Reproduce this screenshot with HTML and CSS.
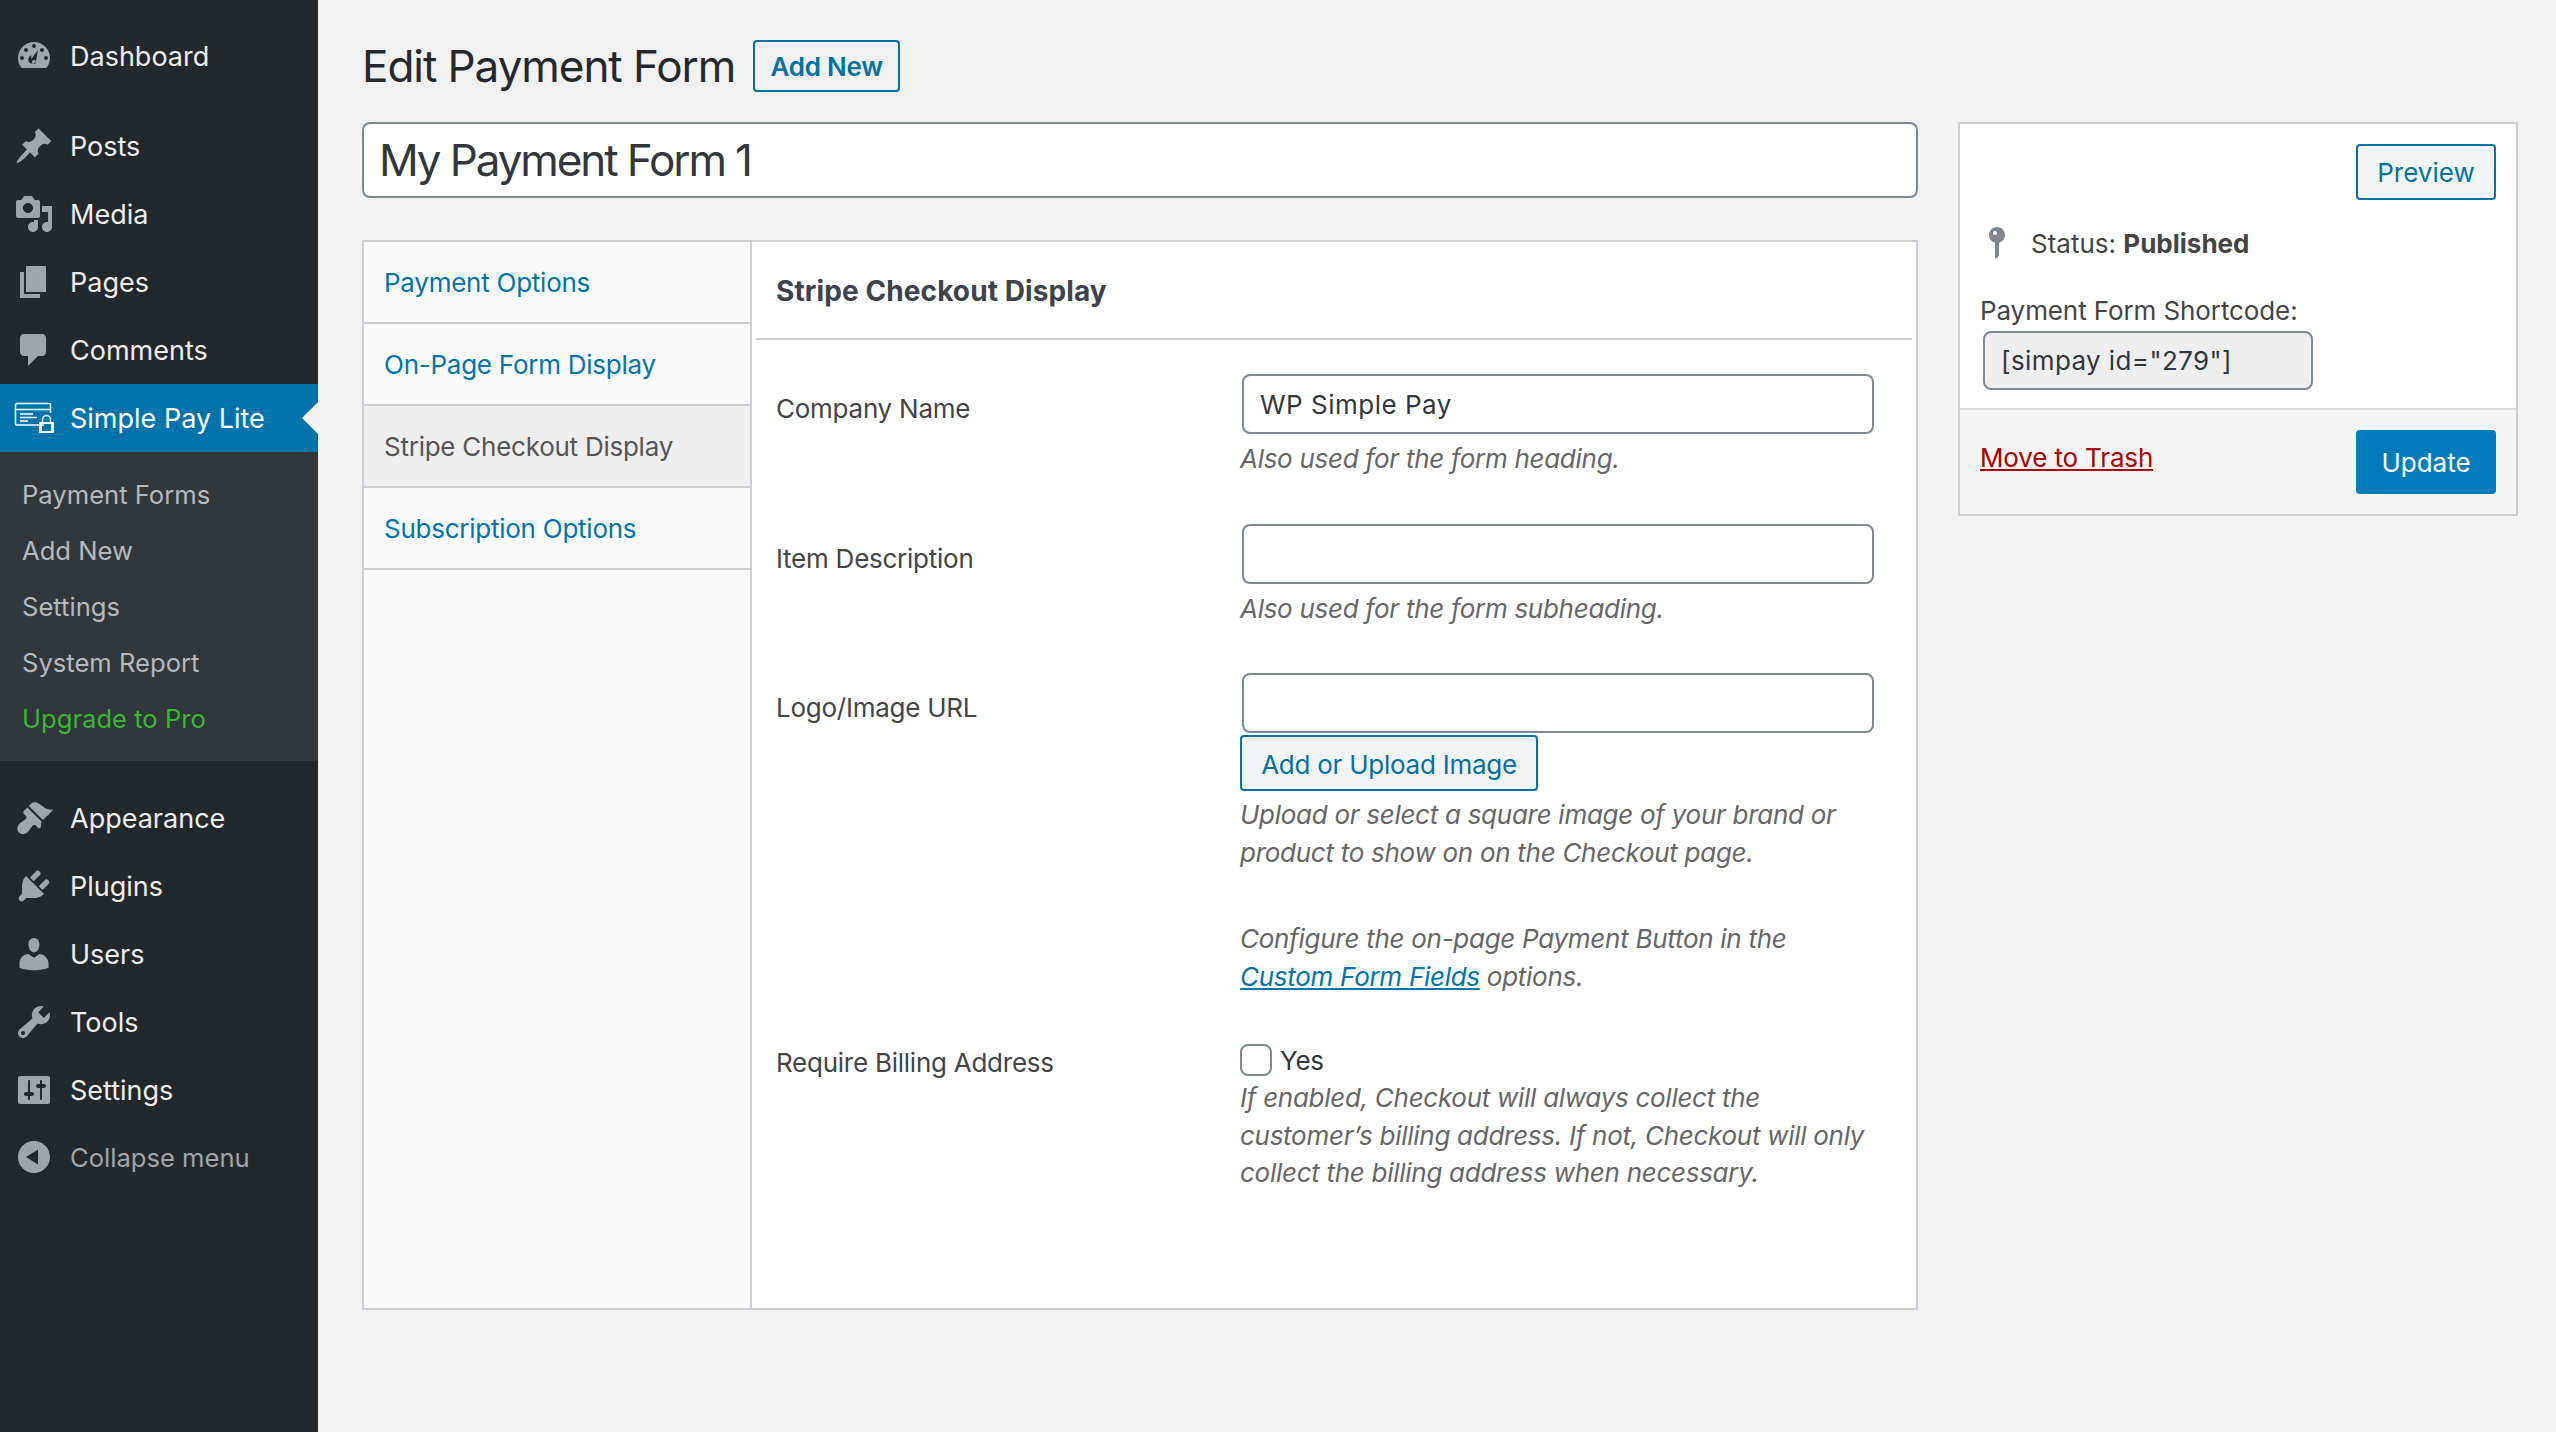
FILE: index.html
```html
<!DOCTYPE html>
<html>
<head>
    <meta charset="utf-8"/>
    <title>Edit Payment Form</title>
    <link rel="stylesheet" href="styles.css">
</head>
<body>
<div id="sidebar">
    <div class="menu-item first">
        <svg class="menu-icon" viewBox="0 0 20 20"><path fill-rule="evenodd" d="M3.76 16h12.48c1.1-1.37 1.76-3.11 1.76-5 0-4.42-3.58-8-8-8s-8 3.58-8 8c0 1.89.66 3.63 1.76 5zM10 4c.55 0 1 .45 1 1s-.45 1-1 1-1-.45-1-1 .45-1 1-1zM6 6c.55 0 1 .45 1 1s-.45 1-1 1-1-.45-1-1 .45-1 1-1zm8 0c.55 0 1 .45 1 1s-.45 1-1 1-1-.45-1-1 .45-1 1-1zm-5.37 5.55L12 7l-.9 5.06c-.07.43-.27.83-.57 1.13-.78.78-2.05.78-2.83 0-.78-.78-.78-2.05 0-2.83.25-.25.58-.39.93-.81zM4 10c.55 0 1 .45 1 1s-.45 1-1 1-1-.45-1-1 .45-1 1-1zm12 0c.55 0 1 .45 1 1s-.45 1-1 1-1-.45-1-1 .45-1 1-1zm-5 3c0-.55-.45-1-1-1s-1 .45-1 1 .45 1 1 1 1-.45 1-1z"/></svg>
        <span>Dashboard</span>
    </div>
    <div class="menu-item">
        <svg class="menu-icon" viewBox="0 0 20 20"><path d="M10.44 3.02l1.82-1.82 6.36 6.35-1.83 1.82c-1.05-.68-2.48-.57-3.41.36l-.75.75c-.92.93-1.04 2.35-.35 3.41l-1.83 1.82-2.41-2.41-2.8 2.79c-.42.42-3.38 2.71-3.8 2.29s1.86-3.39 2.28-3.81l2.79-2.79L4.1 9.36l1.83-1.82c1.05.69 2.48.57 3.4-.36l.75-.75c.93-.92 1.05-2.35.36-3.41z"/></svg>
        <span>Posts</span>
    </div>
    <div class="menu-item">
        <svg class="menu-icon" viewBox="0 0 20 20"><path fill-rule="evenodd" d="M13 11V4c0-.55-.45-1-1-1h-1.67L9 1H5L3.67 3H2c-.55 0-1 .45-1 1v7c0 .55.45 1 1 1h10c.55 0 1-.45 1-1zM7 4.5c1.38 0 2.5 1.12 2.5 2.5S8.38 9.5 7 9.5 4.5 8.38 4.5 7 5.62 4.5 7 4.5zM14 6h5v10.5c0 1.38-1.12 2.5-2.5 2.5S14 17.88 14 16.5s1.12-2.5 2.5-2.5c.17 0 .34.02.5.05V9h-3V6zm-4 8.05V13h2v3.5c0 1.38-1.12 2.5-2.5 2.5S7 17.88 7 16.5 8.12 14 9.5 14c.17 0 .34.02.5.05z"/></svg>
        <span>Media</span>
    </div>
    <div class="menu-item">
        <svg class="menu-icon" viewBox="0 0 20 20"><path d="M6 15V2h10v13H6zm-1 1h8v2H3V5h2v11z"/></svg>
        <span>Pages</span>
    </div>
    <div class="menu-item">
        <svg class="menu-icon" viewBox="0 0 20 20"><path d="M5 2h9c1.1 0 2 .9 2 2v7c0 1.1-.9 2-2 2h-2l-5 5v-5H5c-1.1 0-2-.9-2-2V4c0-1.1.9-2 2-2z"/></svg>
        <span>Comments</span>
    </div>
    <div class="menu-item active">
        <svg class="menu-icon" viewBox="0 0 40 32">
            <path class="outline" d="M30 23H3a1.5 1.5 0 0 1-1.5-1.500V3A1.500 1.500 0 0 1 3 1.500h32A1.500 1.500 0 0 1 36.500 3v8"/>
            <path class="outline" d="M2 7.500h34"/>
            <path class="outline" d="M6 12h13M6 15.500h17M6 19h8"/>
            <path d="M26 20h13a1 1 0 0 1 1 1v9a1 1 0 0 1-1 1H26a1 1 0 0 1-1-1v-9a1 1 0 0 1 1-1zm2 2v7h9v-7z" fill-rule="evenodd"/>
            <path class="outline" d="M28.500 20v-2.500a4 4 0 0 1 8 0V20"/>
        </svg>
        <span>Simple Pay Lite</span>
    </div>
    <div class="submenu">
        <div class="sub-item">Payment Forms</div>
        <div class="sub-item">Add New</div>
        <div class="sub-item">Settings</div>
        <div class="sub-item">System Report</div>
        <div class="sub-item upgrade">Upgrade to Pro</div>
    </div>
    <div class="menu-item after-sub">
        <svg class="menu-icon" viewBox="0 0 20 20"><path d="M14.48 11.06L7.41 3.99l1.5-1.5c.5-.56 2.3-.47 3.51.32 1.21.8 1.43 1.28 2.91 2.1 1.18.64 2.45 1.26 4.45.85z"/><path d="M13.77 11.77L6.7 4.7 4.93 6.47c-.39.39-.39 1.02 0 1.41l1.06 1.06c.39.39.39 1.03 0 1.42-.6.6-1.43 1.11-2.21 1.69-.35.26-.7.53-1.01.84-1.35 1.34-1.43 3.2-.25 4.38 1.18 1.18 3.04 1.1 4.38-.25.31-.31.58-.66.84-1.01.58-.78 1.09-1.61 1.69-2.21.39-.39 1.03-.39 1.42 0l1.06 1.06c.39.39 1.02.39 1.41 0z"/></svg>
        <span>Appearance</span>
    </div>
    <div class="menu-item">
        <svg class="menu-icon" viewBox="0 0 20 20"><path d="M13.110 4.360L9.870 7.600 8 5.730l3.240-3.240c.35-.34 1.050-.2 1.560.32.52.51.66 1.210.31 1.550zm-8 1.770l.91-1.120 9.010 9.010-1.190.84c-.71.71-2.630 1.160-3.820 1.160H6.140L4.900 17.260c-.59.59-1.540.59-2.120 0-.59-.58-.59-1.530 0-2.120l1.240-1.240v-3.880c0-1.130.4-3.190 1.090-3.890zm7.260 3.970l3.240-3.240c.34-.35 1.040-.21 1.550.31.52.51.66 1.210.31 1.550l-3.240 3.250z"/></svg>
        <span>Plugins</span>
    </div>
    <div class="menu-item">
        <svg class="menu-icon" viewBox="0 0 20 20"><path d="M10 9.250c-2.270 0-2.730-3.440-2.730-3.440C7 4.020 7.820 2 9.970 2c2.160 0 2.980 2.020 2.710 3.810 0 0-.41 3.440-2.680 3.440zm0 2.570L12.720 10c2.390 0 4.520 2.330 4.520 4.530v2.490s-3.650 1.130-7.240 1.130c-3.650 0-7.240-1.130-7.240-1.130v-2.490c0-2.250 1.940-4.480 4.470-4.480z"/></svg>
        <span>Users</span>
    </div>
    <div class="menu-item">
        <svg class="menu-icon" viewBox="0 0 20 20"><path fill-rule="evenodd" d="M16.680 9.770c-1.340 1.340-3.300 1.670-4.950.99l-5.410 6.520c-.99.99-2.590.99-3.580 0s-.99-2.590 0-3.570l6.520-5.420c-.68-1.650-.35-3.610.99-4.950 1.280-1.280 3.120-1.620 4.720-1.060l-2.890 2.890 2.820 2.820 2.860-2.870c.53 1.580.18 3.390-1.080 4.650zM3.810 16.210c.4.39 1.040.39 1.430 0 .4-.4.4-1.040 0-1.430-.39-.4-1.030-.4-1.430 0-.39.39-.39 1.030 0 1.430z"/></svg>
        <span>Tools</span>
    </div>
    <div class="menu-item">
        <svg class="menu-icon" viewBox="0 0 20 20"><path fill-rule="evenodd" d="M18 16V4c0-.55-.45-1-1-1H3c-.55 0-1 .45-1 1v12c0 .55.45 1 1 1h14c.55 0 1-.45 1-1zM8 11h1c.55 0 1 .45 1 1s-.45 1-1 1H8v1.500c0 .28-.22.5-.5.5s-.5-.22-.5-.5V13H6c-.55 0-1-.45-1-1s.45-1 1-1h1V5.500c0-.28.22-.5.5-.5s.5.22.5.5V11zm5-2h-1c-.55 0-1-.45-1-1s.45-1 1-1h1V5.500c0-.28.22-.5.5-.5s.5.22.5.5V7h1c.55 0 1 .45 1 1s-.45 1-1 1h-1v5.500c0 .28-.22.5-.5.5s-.5-.22-.5-.5V9z"/></svg>
        <span>Settings</span>
    </div>
    <div class="menu-item collapse">
        <svg class="menu-icon" viewBox="0 0 20 20"><path fill-rule="evenodd" d="M10 2c4.420 0 8 3.580 8 8s-3.580 8-8 8-8-3.580-8-8 3.580-8 8-8zm2 4.200L6 10l6 3.800z"/></svg>
        <span>Collapse menu</span>
    </div>
</div>

<div id="main">
    <div class="title-row">
        <h1>Edit Payment Form</h1>
        <a class="btn add-new">Add New</a>
    </div>
    <div class="columns">
        <div class="left">
            <input type="text" class="title-input" value="My Payment Form 1">
            <div class="settings-box">
                <div class="tabs">
                    <div class="tab">Payment Options</div>
                    <div class="tab">On-Page Form Display</div>
                    <div class="tab current">Stripe Checkout Display</div>
                    <div class="tab">Subscription Options</div>
                </div>
                <div class="panel">
                    <h2>Stripe Checkout Display</h2>
                    <div class="fields">
                        <div class="field">
                            <label>Company Name</label>
                            <div>
                                <input type="text" class="text-input" value="WP Simple Pay">
                                <p class="desc">Also used for the form heading.</p>
                            </div>
                        </div>
                        <div class="field">
                            <label>Item Description</label>
                            <div>
                                <input type="text" class="text-input">
                                <p class="desc">Also used for the form subheading.</p>
                            </div>
                        </div>
                        <div class="field logo">
                            <label>Logo/Image URL</label>
                            <div>
                                <input type="text" class="text-input">
                                <a class="btn upload">Add or Upload Image</a>
                                <p class="desc tight">Upload or select a square image of your brand or<br>product to show on on the Checkout page.</p>
                            </div>
                        </div>
                        <div class="field note">
                            <div></div>
                            <p class="desc">Configure the on-page Payment Button in the<br><a href="#">Custom Form Fields</a> options.</p>
                        </div>
                        <div class="field">
                            <label class="check-label">Require Billing Address</label>
                            <div>
                                <div class="check-row"><span class="checkbox"></span>Yes</div>
                                <p class="desc flush">If enabled, Checkout will always collect the<br>customer’s billing address. If not, Checkout will only<br>collect the billing address when necessary.</p>
                            </div>
                        </div>
                    </div>
                </div>
            </div>
        </div>
        <div class="side-box">
            <div class="publish">
                <div class="preview-row"><a class="btn preview">Preview</a></div>
                <div class="status">
                    <svg viewBox="0 0 20 20"><path fill-rule="evenodd" d="M14 6c0 1.860-1.280 3.410-3 3.860V16c0 1-2 2-2 2V9.860c-1.720-.45-3-2-3-3.860 0-2.210 1.790-4 4-4s4 1.790 4 4zM8 5c0 .55.45 1 1 1s1-.45 1-1-.45-1-1-1-1 .45-1 1z"/></svg>
                    <span>Status: <b>Published</b></span>
                </div>
                <div class="shortcode-label">Payment Form Shortcode:</div>
                <input type="text" class="shortcode" value="[simpay id=&quot;279&quot;]">
            </div>
            <div class="actions">
                <a href="#" class="trash">Move to Trash</a>
                <a class="btn-primary">Update</a>
            </div>
        </div>
    </div>
</div>
</body>
</html>
```

FILE: styles.css
```css
* {
    box-sizing: border-box;
}

body, html {
    margin: 0px;
    padding: 0px;
    height: 100%;
    overflow: hidden;
}

body {
    display: flex;
    background-color: #f1f1f1;
    font-family: 'Inter', 'Liberation Sans', sans-serif;
    font-size: 26px;
    letter-spacing: -0.25px;
    color: #444;
}

#sidebar {
    flex: 0 0 318px;
    background-color: #23282d;
    padding-top: 22px;
    letter-spacing: 0px;
}

.menu-item {
    height: 68px;
    display: flex;
    align-items: center;
    color: #eee;
    font-size: 27px;
    padding-left: 14px;
    position: relative;
}

.menu-item.first {
    margin-bottom: 22px;
}

.menu-item.after-sub {
    margin-top: 23px;
}

.menu-item.collapse {
    color: #a0a5aa;
    font-size: 25.6px;
    height: 66px;
}

.menu-icon {
    width: 40px;
    height: 40px;
    margin-right: 16px;
    fill: #a0a5aa;
    flex: none;
}

.menu-item.active {
    background-color: #0073aa;
    color: white;
}

.menu-item.active .menu-icon {
    fill: white;
}

.menu-item.active .outline {
    fill: none;
    stroke: white;
    stroke-width: 1.5;
}

.menu-item.active::after {
    content: "";
    position: absolute;
    right: 0;
    top: 18px;
    border: 16px solid transparent;
    border-left: 0;
    border-right-color: #f1f1f1;
}

.submenu {
    background-color: #32373c;
    padding: 15px 0px 14px 22px;
}

.sub-item {
    height: 56px;
    line-height: 56px;
    font-size: 25.6px;
    color: #b4b9be;
}

.sub-item.upgrade {
    color: #3bb534;
}

#main {
    flex: 1;
    padding: 40px 0px 0px 44px;
    min-width: 0;
}

.title-row {
    display: flex;
    align-items: center;
    height: 52px;
    margin-bottom: 30px;
}

h1 {
    margin: 0px 18px 0px 0px;
    font-size: 44px;
    font-weight: 400;
    letter-spacing: -1.05px;
    color: #23282d;
}

.btn {
    display: inline-flex;
    align-items: center;
    justify-content: center;
    border: 2px solid #0071a1;
    border-radius: 4px;
    background-color: #f3f5f6;
    color: #0071a1;
    font-size: 26px;
}

.add-new {
    width: 147px;
    height: 52px;
    font-weight: 600;
    background-color: #f1f1f1;
}

.columns {
    display: flex;
    gap: 40px;
    align-items: flex-start;
}

.left {
    flex: 0 0 1556px;
}

.title-input {
    display: block;
    width: 100%;
    height: 76px;
    border: 2px solid #7e8993;
    border-radius: 8px;
    padding: 0px 15px;
    font-family: inherit;
    font-size: 44px;
    letter-spacing: -2.1px;
    color: #32373c;
    background-color: white;
    margin-bottom: 42px;
    outline: none;
}

.settings-box {
    display: flex;
    height: 1070px;
    border: 2px solid #ccd0d4;
    background-color: white;
}

.tabs {
    flex: 0 0 388px;
    background-color: #fafafa;
    border-right: 2px solid #ccd0d4;
}

.tab {
    height: 82px;
    line-height: 82px;
    padding-left: 20px;
    border-bottom: 2px solid #ccd0d4;
    color: #0073aa;
}

.tab.current {
    background-color: #eee;
    color: #555;
}

.panel {
    flex: 1;
    min-width: 0;
}

h2 {
    margin: 0px 4px 0px 4px;
    height: 98px;
    line-height: 98px;
    padding-left: 20px;
    border-bottom: 2px solid #ccd0d4;
    font-size: 28px;
    font-weight: 700;
    letter-spacing: 0.1px;
    color: #3c434a;
}

.fields {
    padding: 34px 0px 0px 24px;
}

.field {
    display: grid;
    grid-template-columns: 464px 632px;
    margin-bottom: 46px;
}

.field.logo {
    margin-bottom: 49px;
}

.field label {
    padding-top: 16px;
    line-height: 37px;
    color: #444;
}

.field label.check-label {
    padding-top: 3px;
}

.text-input {
    display: block;
    width: 632px;
    height: 60px;
    margin-left: 2px;
    border: 2px solid #7e8993;
    border-radius: 8px;
    padding: 0px 16px;
    font-family: inherit;
    font-size: 26px;
    letter-spacing: 0.5px;
    color: #32373c;
    background-color: white;
    outline: none;
}

.desc {
    margin: 6px 0px 0px 0px;
    font-style: italic;
    line-height: 37.5px;
    letter-spacing: -0.28px;
    color: #666;
}

.desc.tight {
    margin-top: 5px;
}

.desc.flush {
    margin-top: 0px;
}

.desc a {
    color: #0073aa;
}

.field.note .desc {
    margin-top: 0px;
}

.upload {
    display: flex;
    width: 298px;
    height: 56px;
    margin-top: 2px;
    padding-top: 2px;
}

.check-row {
    display: flex;
    align-items: center;
    height: 38px;
    color: #32373c;
}

.checkbox {
    width: 32px;
    height: 32px;
    margin-right: 8px;
    border: 2px solid #7e8993;
    border-radius: 8px;
    background-color: white;
}

.side-box {
    flex: 0 0 560px;
    border: 2px solid #ccd0d4;
    background-color: white;
    letter-spacing: 0px;
}

.publish {
    padding: 20px 20px 18px 20px;
}

.preview-row {
    display: flex;
    justify-content: flex-end;
}

.preview {
    width: 140px;
    height: 56px;
}

.status {
    display: flex;
    align-items: center;
    height: 46px;
    margin-top: 20px;
}

.status svg {
    width: 40px;
    height: 40px;
    fill: #82878c;
    margin-left: -3px;
    margin-right: 14px;
}

.shortcode-label {
    margin-top: 27px;
    line-height: 36px;
    letter-spacing: -0.1px;
}

.shortcode {
    display: block;
    width: 330px;
    height: 59px;
    margin-left: 3px;
    margin-top: 2px;
    border: 2px solid #7e8993;
    border-radius: 8px;
    padding: 0px 16px;
    font-family: inherit;
    font-size: 26px;
    letter-spacing: 0.4px;
    color: #32373c;
    background-color: #eee;
    outline: none;
}

.actions {
    display: flex;
    justify-content: space-between;
    align-items: center;
    padding: 20px 20px 20px 20px;
    background-color: #f5f5f5;
    border-top: 2px solid #ddd;
}

.trash {
    color: #a00;
    margin-top: -10px;
    letter-spacing: -0.15px;
}

.btn-primary {
    display: flex;
    align-items: center;
    justify-content: center;
    width: 140px;
    height: 64px;
    border-radius: 4px;
    background-color: #007cba;
    color: white;
}
```
